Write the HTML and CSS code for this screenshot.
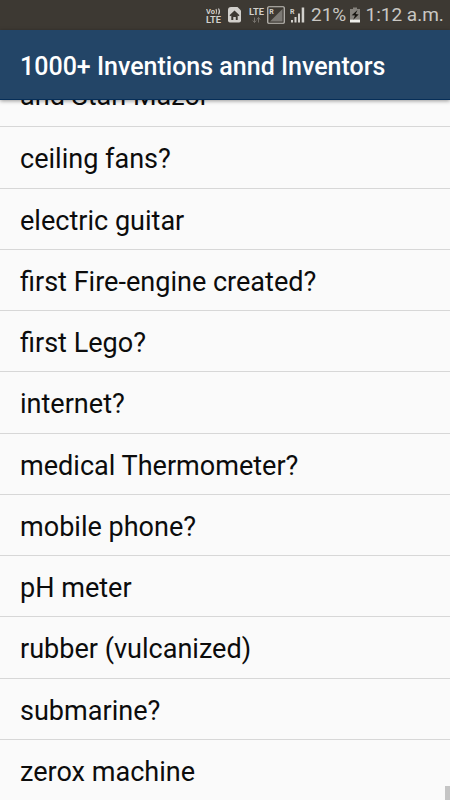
FILE: index.html
```html
<!DOCTYPE html>
<html lang="en">
<head>
<meta charset="utf-8">
<title>1000+ Inventions annd Inventors</title>
<link rel="stylesheet" href="styles.css">
</head>
<body>
<div class="screen">
  <div class="status">
    <svg class="volte" width="16" height="30" viewBox="0 0 16 30"><text x="0" y="14" textLength="9" lengthAdjust="spacingAndGlyphs" font-size="7">Vo</text><path d="M10 9q1.200 2.500 0 5M12.500 8.500q2 3 0 6" fill="none" stroke="#d2d0cc" stroke-width="1.100"/><text x="0" y="22.500" font-size="8.500" textLength="15" lengthAdjust="spacingAndGlyphs">LTE</text></svg>
    <svg class="home" width="13" height="30" viewBox="0 0 13 30"><path fill="#d2d0cc" d="M3 7h6.500L13 10.500V20.500a2 2 0 0 1-2 2H2a2 2 0 0 1-2-2V10a3 3 0 0 1 3-3z"/><path fill="#3d3933" d="M6.500 10.500l5 4.700-1 1-.8-.6V20H7.800v-3H5.300v3h-2v-4.400l-.8.6-1-1z"/></svg>
    <svg class="lte" width="16" height="30" viewBox="0 0 16 30"><text x="0" y="14.500" font-size="8.500" textLength="15" lengthAdjust="spacingAndGlyphs">LTE</text><path d="M5.500 17.500v5M3.800 20.500l1.700 2 1.700-2M9.500 22.500v-5M7.900 19.500l1.600-2 1.600 2" stroke="#77736d" fill="none"/></svg>
    <svg class="roam" width="18" height="30" viewBox="0 0 18 30"><rect x=".75" y="6.750" width="16.500" height="16.500" rx="1" fill="none" stroke="#c3c1bc" stroke-width="1.200"/><path d="M3 21.500L15.500 9v12.500z" fill="#7c7974"/><text x="2.200" y="14" font-size="7">R</text></svg>
    <svg class="signal" width="16" height="30" viewBox="0 0 16 30"><text x="0" y="14" font-size="7">R</text><path d="M1 20h2v2.500H1zM4.500 17h2v5.500h-2zM8 13.500h2v9H8zM11.700 7.500h2.500v15h-2.500z" fill="#d2d0cc"/></svg>
    <span class="percent">21%</span>
    <svg class="battery" width="10" height="30" viewBox="0 0 10 30"><path d="M3 7.500h4V9h3v10.500H0V9h3z" fill="#85827c"/><path d="M0 19.500h10v3H0z" fill="#eeeeea"/><path d="M7.500 10L1.700 15.200l3.300.3-1.800 4.200 5.500-5.200-3.100-.4z" fill="#181611"/></svg>
    <span class="time">1:12 a.m.</span>
  </div>
  <header class="toolbar"><h1>1000+ Inventions annd Inventors</h1></header>
  <main class="viewport">
    <ul class="list">
      <li>and Stan Mazor</li>
      <li>ceiling fans?</li>
      <li>electric guitar</li>
      <li>first Fire-engine created?</li>
      <li>first Lego?</li>
      <li>internet?</li>
      <li>medical Thermometer?</li>
      <li>mobile phone?</li>
      <li>pH meter</li>
      <li>rubber (vulcanized)</li>
      <li>submarine?</li>
      <li>zerox machine</li>
    </ul>
    <div class="scrollbar"></div>
  </main>
</div>
</body>
</html>
```

FILE: styles.css
```css
* { box-sizing: border-box; }
body { margin: 0; background: #fafafa; font-family: Roboto, sans-serif; }
.screen { width: 450px; height: 800px; display: flex; flex-direction: column; overflow: hidden; }
.status {
  height: 30px; flex: none; display: flex; align-items: center; justify-content: flex-start;
  padding-left: 206px; background: #3d3933; color: #c9c7c3; font-size: 19px; line-height: 32px;
  white-space: nowrap;
}
.status svg { flex: none; display: block; }
.status svg text { font-family: Roboto, sans-serif; font-weight: 700; fill: #d2d0cc; }
.home { margin-left: 6px; }
.lte { margin-left: 7.500px; }
.roam { margin-left: 2.500px; }
.signal { margin-left: 5px; }
.percent { margin-left: 5px; width: 36px; flex: none; }
.battery { margin-left: 3px; }
.time { margin-left: 5.500px; }
.toolbar {
  position: relative; z-index: 1; flex: none; height: 70px; display: flex; align-items: center;
  padding: 4px 20px 0; background: #234567; color: #fff;
  border-bottom: 1px solid #062e58; box-shadow: 0 1px 4px rgba(0, 0, 0, .4);
}
h1 { margin: 0; font-size: 25px; font-weight: 500; line-height: 32px; white-space: nowrap; }
.viewport { position: relative; flex: 1; min-height: 0; overflow: hidden; }
.list { list-style: none; margin: -34px 0 0; padding: 0; }
.list li {
  height: 61.270px; padding: 2px 20px 0; border-bottom: 1px solid #d7d7d7;
  color: #0c0c0c; font-size: 27.050px; line-height: 61px; white-space: nowrap;
}
.list li:first-child { padding-top: 0; }
.list li:last-child { border-bottom: 0; }
.scrollbar { position: absolute; right: 0; bottom: 0; width: 5px; height: 14px; background: #c5c5c5; }
```
